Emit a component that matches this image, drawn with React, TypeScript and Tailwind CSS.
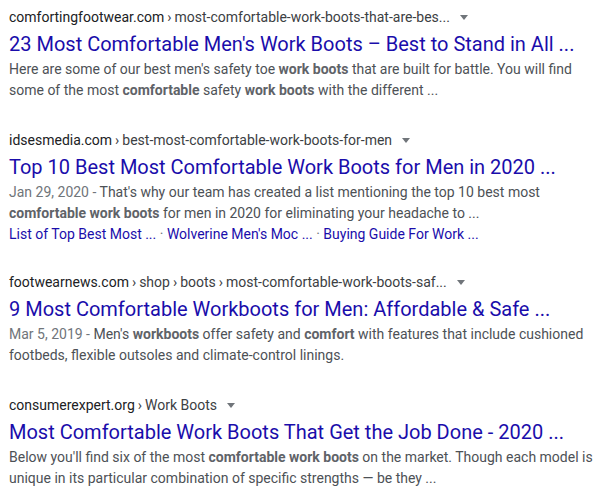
import React from 'react';

type Part = string | { b: string };

interface Result {
    site: string;
    path: string[];
    title: string;
    date?: string;
    lines: Part[][];
    sitelinks?: string[];
}

const results: Result[] = [
    {
        site: 'comfortingfootwear.com',
        path: ['most-comfortable-work-boots-that-are-bes...'],
        title: "23 Most Comfortable Men's Work Boots \u2013 Best to Stand in All ...",
        lines: [
            ["Here are some of our best men's safety toe ", { b: 'work boots' }, ' that are built for battle. You will find'],
            ['some of the most ', { b: 'comfortable' }, ' safety ', { b: 'work boots' }, ' with the different ...'],
        ],
    },
    {
        site: 'idsesmedia.com',
        path: ['best-most-comfortable-work-boots-for-men'],
        title: 'Top 10 Best Most Comfortable Work Boots for Men in 2020 ...',
        date: 'Jan 29, 2020',
        lines: [
            ["That's why our team has created a list mentioning the top 10 best most"],
            [{ b: 'comfortable work boots' }, ' for men in 2020 for eliminating your headache to ...'],
        ],
        sitelinks: ['List of Top Best Most ...', "Wolverine Men's Moc ...", 'Buying Guide For Work ...'],
    },
    {
        site: 'footwearnews.com',
        path: ['shop', 'boots', 'most-comfortable-work-boots-saf...'],
        title: '9 Most Comfortable Workboots for Men: Affordable & Safe ...',
        date: 'Mar 5, 2019',
        lines: [
            ["Men's ", { b: 'workboots' }, ' offer safety and ', { b: 'comfort' }, ' with features that include cushioned'],
            ['footbeds, flexible outsoles and climate-control linings.'],
        ],
    },
    {
        site: 'consumerexpert.org',
        path: ['Work Boots'],
        title: 'Most Comfortable Work Boots That Get the Job Done - 2020 ...',
        lines: [
            ["Below you'll find six of the most ", { b: 'comfortable work boots' }, ' on the market. Though each model is'],
            ['unique in its particular combination of specific strengths \u2014 be they ...'],
        ],
    },
];

const SearchResult: React.FC<{ r: Result }> = ({ r }) => (
    <div className={r.sitelinks ? 'mb-[27px]' : 'mb-[29px]'}>
        <div className="flex items-center h-5 text-[14px] leading-5 text-[#202124] whitespace-nowrap">
            <span>{r.site}</span>
            {r.path.map((p, i) => (
                <span key={i} className="text-[#3c4043]">
                    <span className="px-[3px]">&rsaquo;</span>
                    {p}
                </span>
            ))}
            <span className="ml-[10px] mt-[1px] w-0 h-0 border-l-[4px] border-r-[4px] border-t-[5px] border-l-transparent border-r-transparent border-t-[#70757a]" />
        </div>
        <div className="mt-[4px] text-[20px] leading-[26px] text-[#1a0dab] whitespace-nowrap">{r.title}</div>
        <div className="mt-[2px] text-[14px] leading-[21px] text-[#4d5156]">
            {r.lines.map((line, li) => (
                <div key={li} className="whitespace-nowrap">
                    {li === 0 && r.date && <span className="text-[#70757a]">{r.date} - </span>}
                    {line.map((part, pi) =>
                        typeof part === 'string' ? (
                            <span key={pi}>{part}</span>
                        ) : (
                            <b key={pi} className="font-bold text-[#5f6368]">{part.b}</b>
                        )
                    )}
                </div>
            ))}
            {r.sitelinks && (
                <div className="whitespace-nowrap text-[#1a0dab]">
                    {r.sitelinks.map((s, i) => (
                        <span key={i}>
                            {i > 0 && <span className="text-[#70757a]"> &middot; </span>}
                            {s}
                        </span>
                    ))}
                </div>
            )}
        </div>
    </div>
);

export default function App() {
    return (
        <div className="w-[608px] h-[500px] overflow-hidden bg-white pl-[9px] pt-[7px]" style={{ fontFamily: 'Roboto, Arial, sans-serif' }}>
            {results.map((r, i) => (
                <SearchResult key={i} r={r} />
            ))}
        </div>
    );
}
